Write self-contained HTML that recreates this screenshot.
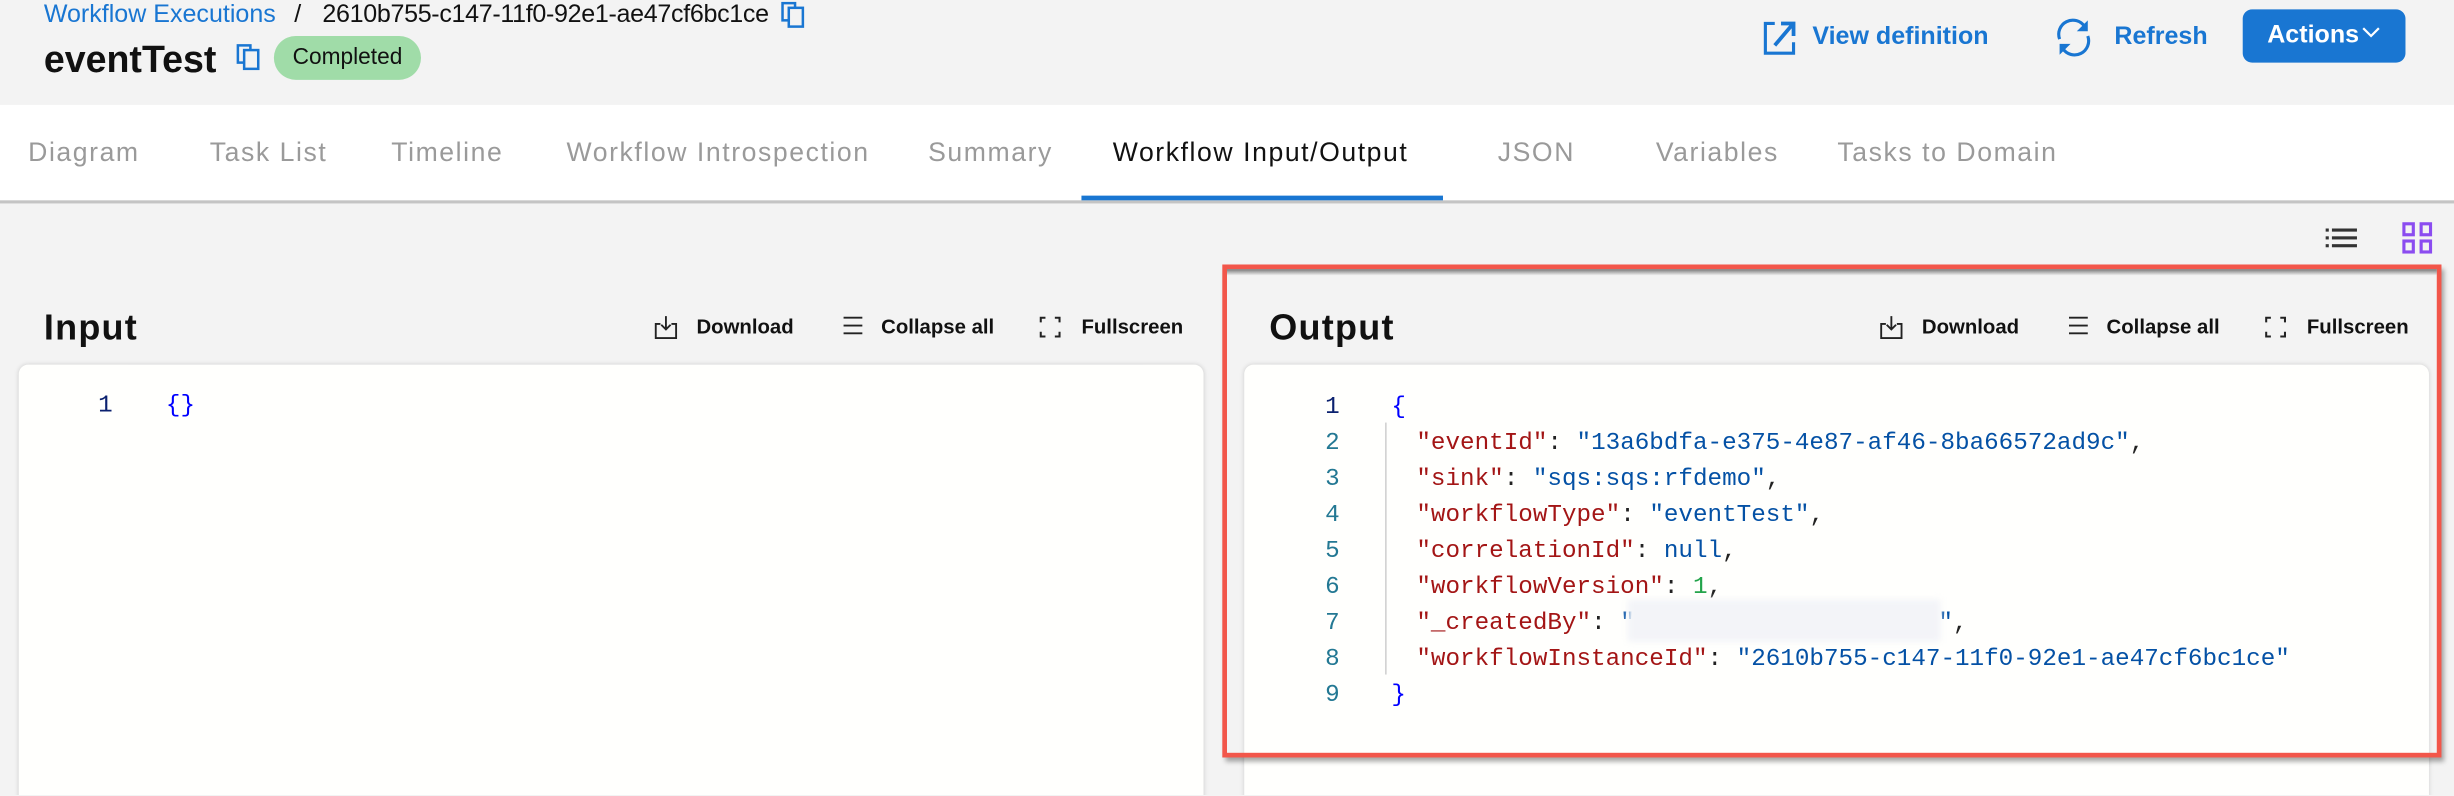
<!DOCTYPE html>
<html><head><meta charset="utf-8"><style>
html,body{margin:0;padding:0;width:2454px;height:796px;overflow:hidden;background:#f3f3f3}
#w{position:absolute;left:0;top:0;width:1568px;height:508px;overflow:hidden;transform:scale(1.56505);transform-origin:0 0;font-family:"Liberation Sans",sans-serif;background:#f3f3f3}
.a{position:absolute;white-space:nowrap}
.tab{position:absolute;top:88px;font-size:17px;letter-spacing:1px;color:#9a9a9a;line-height:20px}
.btn{position:absolute;font-size:13px;font-weight:bold;color:#111;line-height:16px}
.mono{font-family:"Liberation Mono",monospace;font-size:15.5px}
.ln{position:absolute;width:30px;text-align:right;color:#237893}
.k{color:#a31515}.s{color:#0451a5}.p{color:#222}
</style></head><body><div id="w">
<div class="a" style="left:28px;top:1px;font-size:16px;line-height:18px;color:#1976d2">Workflow Executions</div>
<div class="a" style="left:188px;top:1px;font-size:16px;line-height:18px;color:#111">/</div>
<div class="a" style="left:206px;top:1px;font-size:16px;letter-spacing:-0.2px;line-height:18px;color:#111">2610b755-c147-11f0-92e1-ae47cf6bc1ce</div>
<svg class="a" style="left:499px;top:1px" width="16" height="17" viewBox="0 0 16 17"><rect x="1" y="1" width="8" height="11" fill="none" stroke="#1976d2" stroke-width="1.6"/><rect x="5" y="4" width="9" height="12" fill="#f3f3f3" stroke="#1976d2" stroke-width="1.6"/></svg>
<div class="a" style="left:28px;top:25px;font-size:24px;font-weight:bold;line-height:28px;color:#111">eventTest</div>
<svg class="a" style="left:151px;top:28px" width="16" height="17" viewBox="0 0 16 17"><rect x="1" y="1" width="8" height="11" fill="none" stroke="#1976d2" stroke-width="1.6"/><rect x="5" y="4" width="9" height="12" fill="#f3f3f3" stroke="#1976d2" stroke-width="1.6"/></svg>
<div class="a" style="left:175px;top:23px;width:94px;height:28px;border-radius:14px;background:#a0dca8;font-size:14.5px;line-height:28px;text-align:center;color:#111">Completed</div>

<svg class="a" style="left:1126px;top:12px" width="22" height="24" viewBox="0 0 22 24"><path d="M8 3H2v19h18v-7" fill="none" stroke="#1976d2" stroke-width="2"/><path d="M8 17L19 4M12 3h8v8" fill="none" stroke="#1976d2" stroke-width="2.4"/></svg>
<div class="a" style="left:1158px;top:14px;font-size:16px;font-weight:bold;line-height:20px;color:#1976d2">View definition</div>
<svg class="a" style="left:1312px;top:11px" width="26" height="26" viewBox="0 0 26 26"><path d="M4 14A9 9 0 0 1 20 6" fill="none" stroke="#1976d2" stroke-width="2"/><path d="M22 2v7h-7z" fill="#1976d2"/><path d="M22 12A9 9 0 0 1 6 20" fill="none" stroke="#1976d2" stroke-width="2"/><path d="M4 24v-7h7z" fill="#1976d2"/></svg>
<div class="a" style="left:1351px;top:14px;font-size:16px;font-weight:bold;line-height:20px;color:#1976d2">Refresh</div>
<div class="a" style="left:1433px;top:6px;width:104px;height:34px;border-radius:6px;background:#1976d2;color:#fff;font-size:16px;font-weight:bold;line-height:34px;text-align:center">Actions<svg width="12" height="8" viewBox="0 0 12 8" style="margin-left:2px;vertical-align:2px"><path d="M1 1l5 5 5-5" fill="none" stroke="#fff" stroke-width="1.4"/></svg></div>

<div class="a" style="left:0;top:67px;width:1568px;height:61px;background:#fff;border-bottom:2px solid #c4c4c4"></div>
<div class="tab" style="left:18px">Diagram</div>
<div class="tab" style="left:134px">Task List</div>
<div class="tab" style="left:250px">Timeline</div>
<div class="tab" style="left:362px">Workflow Introspection</div>
<div class="tab" style="left:593px">Summary</div>
<div class="tab" style="left:711px;color:#111">Workflow Input/Output</div>
<div class="tab" style="left:957px">JSON</div>
<div class="tab" style="left:1058px">Variables</div>
<div class="tab" style="left:1174px">Tasks to Domain</div>
<div class="a" style="left:691px;top:125px;width:231px;height:3px;background:#1976d2"></div>

<svg class="a" style="left:1485px;top:144px" width="22" height="16" viewBox="0 0 22 16"><g fill="#333"><rect x="1" y="2" width="2" height="2"/><rect x="5" y="2" width="16" height="2"/><rect x="1" y="7" width="2" height="2"/><rect x="5" y="7" width="16" height="2"/><rect x="1" y="12" width="2" height="2"/><rect x="5" y="12" width="16" height="2"/></g></svg>
<svg class="a" style="left:1534px;top:141px" width="22" height="22" viewBox="0 0 22 22"><g fill="none" stroke="#8b4cf0" stroke-width="2"><rect x="2" y="2" width="6" height="7"/><rect x="13" y="2" width="6" height="7"/><rect x="2" y="13" width="6" height="7"/><rect x="13" y="13" width="6" height="7"/></g></svg>

<div class="a" style="left:28px;top:196px;font-size:23px;letter-spacing:0.8px;font-weight:bold;line-height:26px;color:#111">Input</div>
<svg class="a" style="left:418px;top:201px" width="16" height="16" viewBox="0 0 16 16"><path d="M4 6H1v9h13V6h-3M7.5 1v8M4.5 6.5l3 3 3-3" fill="none" stroke="#222" stroke-width="1.2"/></svg>
<div class="btn" style="left:445px;top:201px">Download</div>
<svg class="a" style="left:538px;top:202px" width="14" height="12" viewBox="0 0 14 12"><path d="M1 1h12M1 6h12M1 11h12" stroke="#222" stroke-width="1.2"/></svg>
<div class="btn" style="left:563px;top:201px">Collapse all</div>
<svg class="a" style="left:664px;top:202px" width="14" height="14" viewBox="0 0 14 14"><path d="M1 4V1h3M10 1h3v3M13 10v3h-3M4 13H1v-3" fill="none" stroke="#222" stroke-width="1.3"/></svg>
<div class="btn" style="left:691px;top:201px">Fullscreen</div>
<div class="a" style="left:12px;top:233px;width:757px;height:300px;background:#fffffd;border-radius:6px;box-shadow:0 0 3px rgba(0,0,0,.15)"></div>
<div class="a mono" style="left:42px;top:249px;line-height:20px"><span class="ln" style="left:0;color:#0b216f">1</span><span style="position:absolute;left:64px;color:#0000ff">{}</span></div>

<div class="a" style="left:795px;top:233px;width:757px;height:300px;background:#fffffd;border-radius:6px;box-shadow:0 0 3px rgba(0,0,0,.15)"></div>
<div class="a" style="left:811px;top:196px;font-size:23px;letter-spacing:0.8px;font-weight:bold;line-height:26px;color:#111">Output</div>
<svg class="a" style="left:1201px;top:201px" width="16" height="16" viewBox="0 0 16 16"><path d="M4 6H1v9h13V6h-3M7.5 1v8M4.5 6.5l3 3 3-3" fill="none" stroke="#222" stroke-width="1.2"/></svg>
<div class="btn" style="left:1228px;top:201px">Download</div>
<svg class="a" style="left:1321px;top:202px" width="14" height="12" viewBox="0 0 14 12"><path d="M1 1h12M1 6h12M1 11h12" stroke="#222" stroke-width="1.2"/></svg>
<div class="btn" style="left:1346px;top:201px">Collapse all</div>
<svg class="a" style="left:1447px;top:202px" width="14" height="14" viewBox="0 0 14 14"><path d="M1 4V1h3M10 1h3v3M13 10v3h-3M4 13H1v-3" fill="none" stroke="#222" stroke-width="1.3"/></svg>
<div class="btn" style="left:1474px;top:201px">Fullscreen</div>

<div class="a mono" style="left:826px;top:249px;width:700px;line-height:23px">
<div style="position:relative;height:23px"><span class="ln" style="color:#0b216f">1</span><span style="position:absolute;left:63px;color:#0000ff">{</span></div>
<div style="position:relative;height:23px"><span class="ln">2</span><span style="position:absolute;left:79px"><span class="k">"eventId"</span><span class="p">: </span><span class="s">"13a6bdfa-e375-4e87-af46-8ba66572ad9c"</span><span class="p">,</span></span></div>
<div style="position:relative;height:23px"><span class="ln">3</span><span style="position:absolute;left:79px"><span class="k">"sink"</span><span class="p">: </span><span class="s">"sqs:sqs:rfdemo"</span><span class="p">,</span></span></div>
<div style="position:relative;height:23px"><span class="ln">4</span><span style="position:absolute;left:79px"><span class="k">"workflowType"</span><span class="p">: </span><span class="s">"eventTest"</span><span class="p">,</span></span></div>
<div style="position:relative;height:23px"><span class="ln">5</span><span style="position:absolute;left:79px"><span class="k">"correlationId"</span><span class="p">: </span><span class="s">null</span><span class="p">,</span></span></div>
<div style="position:relative;height:23px"><span class="ln">6</span><span style="position:absolute;left:79px"><span class="k">"workflowVersion"</span><span class="p">: </span><span style="color:#22a34a">1</span><span class="p">,</span></span></div>
<div style="position:relative;height:23px"><span class="ln">7</span><span style="position:absolute;left:79px"><span class="k">"_createdBy"</span><span class="p">: </span><span class="s">"</span><span style="display:inline-block;width:194px"></span><span class="s">"</span><span class="p">,</span></span></div>
<div style="position:relative;height:23px"><span class="ln">8</span><span style="position:absolute;left:79px"><span class="k">"workflowInstanceId"</span><span class="p">: </span><span class="s">"2610b755-c147-11f0-92e1-ae47cf6bc1ce"</span></span></div>
<div style="position:relative;height:23px"><span class="ln">9</span><span style="position:absolute;left:63px;color:#0000ff">}</span></div>
</div>
<div class="a" style="left:885px;top:270px;width:1px;height:161px;background:#d0d0d0"></div>
<div class="a" style="left:1040px;top:383px;width:200px;height:27px;background:#f3f4f8;filter:blur(2px)"></div>

<div class="a" style="left:781px;top:169px;width:773px;height:309px;border:3px solid #f2564a;box-shadow:2px 3px 3px rgba(0,0,0,.35)"></div>
<div class="a" style="left:784px;top:172px;width:773px;height:4px;background:linear-gradient(#777,rgba(120,120,120,0))"></div>
</div></body></html>
